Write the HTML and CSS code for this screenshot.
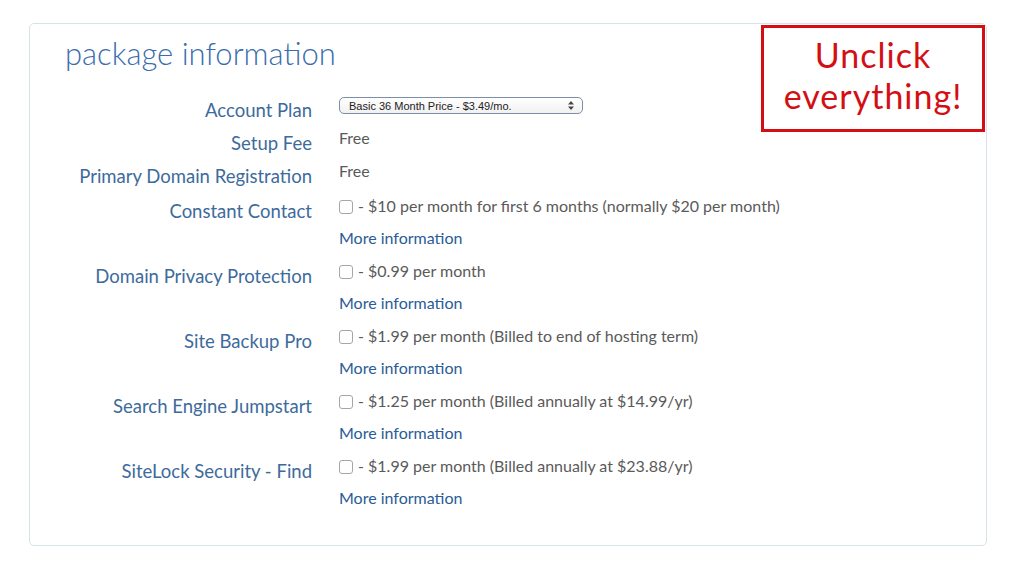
FILE: index.html
```html
<!DOCTYPE html>
<html lang="en">
<head>
  <meta charset="UTF-8" />
  <title>Package Information</title>
  <link rel="stylesheet" href="styles.css">
</head>
<body>
  <div class="card">
    <h2 class="title">package information</h2>

    <div class="note">Unclick<br>everything!</div>

    <div class="row">
      <div class="label">Account Plan</div>
      <div class="value">
        <div class="select">
          <span>Basic 36 Month Price - $3.49/mo.</span>
          <svg class="arrows" width="6" height="9" viewBox="0 0 6 9">
            <path d="M3 0 L6 3.5 L0 3.5 Z M3 9 L6 5.5 L0 5.5 Z" fill="#444"/>
          </svg>
        </div>
      </div>
    </div>
    <div class="row">
      <div class="label">Setup Fee</div>
      <div class="value text">Free</div>
    </div>
    <div class="row">
      <div class="label">Primary Domain Registration</div>
      <div class="value text">Free</div>
    </div>

    <div class="row addon">
      <div class="label">Constant Contact</div>
      <div class="value">
        <div class="check-line"><span class="box"></span>- $10 per month for first 6 months (normally $20 per month)</div>
        <a class="more" href="#">More information</a>
      </div>
    </div>
    <div class="row addon">
      <div class="label">Domain Privacy Protection</div>
      <div class="value">
        <div class="check-line"><span class="box"></span>- $0.99 per month</div>
        <a class="more" href="#">More information</a>
      </div>
    </div>
    <div class="row addon">
      <div class="label">Site Backup Pro</div>
      <div class="value">
        <div class="check-line"><span class="box"></span>- $1.99 per month (Billed to end of hosting term)</div>
        <a class="more" href="#">More information</a>
      </div>
    </div>
    <div class="row addon">
      <div class="label">Search Engine Jumpstart</div>
      <div class="value">
        <div class="check-line"><span class="box"></span>- $1.25 per month (Billed annually at $14.99/yr)</div>
        <a class="more" href="#">More information</a>
      </div>
    </div>
    <div class="row addon">
      <div class="label">SiteLock Security - Find</div>
      <div class="value">
        <div class="check-line"><span class="box"></span>- $1.99 per month (Billed annually at $23.88/yr)</div>
        <a class="more" href="#">More information</a>
      </div>
    </div>
  </div>
</body>
</html>
```

FILE: styles.css
```css
body {
  margin: 0;
  background: #fff;
  font-family: Lato, "Open Sans", sans-serif;
}
.card {
  position: relative;
  width: 956px;
  min-height: 481px;
  margin: 23px 0 0 29px;
  padding: 9px 0 27px 0;
  border: 1px solid #d6e4ea;
  border-radius: 5px;
}
.title {
  margin: 0 0 21px 35px;
  font-size: 31px;
  font-weight: 300;
  line-height: 40px;
  color: #3a6cae;
}
.note {
  position: absolute;
  top: 1px;
  left: 731px;
  width: 218px;
  height: 95px;
  padding-top: 6px;
  border: 3px solid #d40f14;
  color: #d40f14;
  font-size: 34px;
  letter-spacing: 1px;
  line-height: 41px;
  text-align: center;
}
.row {
  display: flex;
  gap: 27px;
}
.label {
  flex-shrink: 0;
  width: 248px;
  margin-left: 34px;
  text-align: right;
  white-space: nowrap;
  font-size: 18.5px;
  line-height: 33px;
  color: #3d6b9c;
}
.value {
  color: #5a5a5a;
  font-size: 16px;
  line-height: 22px;
}
.select {
  display: flex;
  align-items: center;
  justify-content: space-between;
  width: 225px;
  height: 15px;
  margin-top: 3px;
  padding: 0 8px 0 9px;
  border: 1px solid #7d8fa6;
  border-radius: 5px;
  background: linear-gradient(#fff, #f1f1f1);
  font-family: "Liberation Sans", Arial, sans-serif;
  font-size: 11px;
  color: #222;
}
.addon .label {
  line-height: 36px;
}
.addon .value {
  padding-bottom: 9px;
}
.check-line {
  display: flex;
  align-items: center;
  line-height: 25px;
  white-space: nowrap;
}
.box {
  width: 12px;
  height: 12px;
  margin: 2px 5px 0 0;
  border: 1px solid #a6a6a6;
  border-radius: 3px;
  background: #fff;
}
.more {
  display: block;
  margin-top: 9px;
  color: #2a5c96;
  text-decoration: none;
}
```
